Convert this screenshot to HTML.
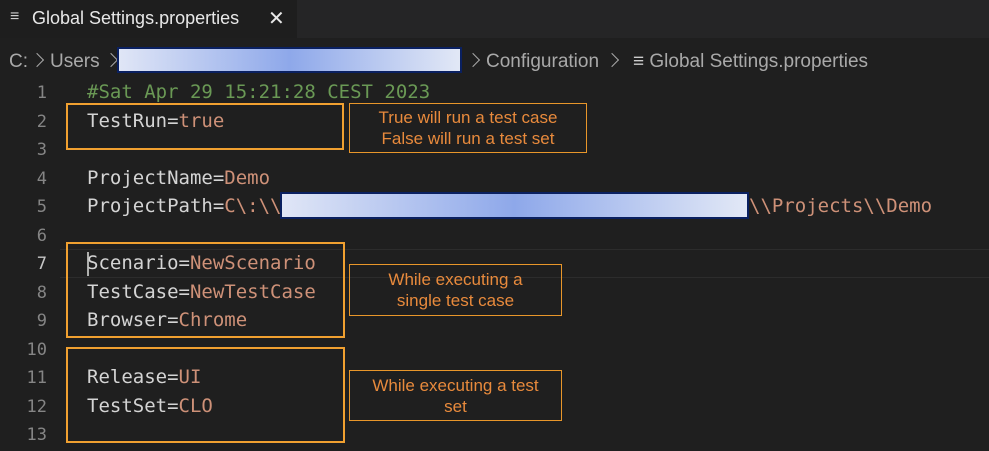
<!DOCTYPE html>
<html><head><style>
body{margin:0;width:989px;height:451px;background:#1f1f1f;overflow:hidden;position:relative;font-family:"Liberation Sans",sans-serif}
.a{position:absolute}
.tabbar{left:0;top:0;width:989px;height:38px;background:#252526}
.tab{left:0;top:0;width:297px;height:38px;background:#1e1e1e;color:#e8e8e8;font-size:18px}
.crumb{top:51px;color:#a9a9a9;font-size:19px;white-space:nowrap}
.ch{display:inline-block;width:9px;height:9px;border-top:1.5px solid #a9a9a9;border-right:1.5px solid #a9a9a9;transform:rotate(45deg);margin:0 8px 2px 2px}
.ln{width:47px;text-align:right;color:#858585;font-family:"DejaVu Sans Mono",monospace;font-size:17px}
.code{left:87px;font-family:"DejaVu Sans Mono",monospace;font-size:19px;color:#d4d4d4;white-space:pre}
.v{color:#ce9178}.c{color:#6a9955}
.box{border:2px solid #f0a030;box-sizing:border-box}
.note{border:1px solid #e8962a;box-sizing:border-box;color:#e88a3c;font-size:17px;text-align:center;line-height:21px}
.blur{border:2px solid #0a2060;box-sizing:border-box;background:linear-gradient(90deg,#e0e6f6,#8ea8ea 50%,#e2e8f6)}
</style></head><body>
<div class="a tabbar"></div>
<div class="a tab"><span class="a" style="left:10px;top:8px;font-size:16px;color:#ccc">≡</span><span class="a" style="left:32px;top:8px">Global Settings.properties</span><span class="a" style="left:268px;top:6px;font-size:20px">✕</span></div>
<div class="a crumb" style="left:9px">C:<span class="ch" style="margin-left:4px"></span>Users<span class="ch" style="margin-left:6px"></span></div>
<div class="a blur" style="left:117px;top:47px;width:345px;height:26px"></div>
<div class="a crumb" style="left:466px"><span class="ch"></span>Configuration<span class="ch" style="margin-left:8px"></span><span style="color:#ccc;margin-left:8px">≡</span> Global Settings.properties</div>
<div class="a" style="left:60px;top:249px;width:929px;height:29px;border-top:1px solid #2c2c2c;border-bottom:1px solid #2c2c2c;box-sizing:border-box"></div>
<div class="a" style="left:87px;top:252px;width:2px;height:24px;background:#aeafad"></div>
<div class="a ln" style="top:83px">1</div><div class="a code c" style="top:81px">#Sat Apr 29 15:21:28 CEST 2023</div>
<div class="a ln" style="top:112px">2</div><div class="a code" style="top:110px">TestRun=<span class="v">true</span></div>
<div class="a ln" style="top:140px">3</div>
<div class="a ln" style="top:169px">4</div><div class="a code" style="top:167px">ProjectName=<span class="v">Demo</span></div>
<div class="a ln" style="top:197px">5</div><div class="a code" style="top:195px">ProjectPath=<span class="v">C\:\\</span></div>
<div class="a code v" style="top:195px;left:749px">\\Projects\\Demo</div>
<div class="a blur" style="left:280px;top:192px;width:469px;height:27px"></div>
<div class="a ln" style="top:226px">6</div>
<div class="a ln" style="top:254px;color:#c6c6c6">7</div><div class="a code" style="top:252px">Scenario=<span class="v">NewScenario</span></div>
<div class="a ln" style="top:283px">8</div><div class="a code" style="top:281px">TestCase=<span class="v">NewTestCase</span></div>
<div class="a ln" style="top:311px">9</div><div class="a code" style="top:309px">Browser=<span class="v">Chrome</span></div>
<div class="a ln" style="top:340px">10</div>
<div class="a ln" style="top:368px">11</div><div class="a code" style="top:366px">Release=<span class="v">UI</span></div>
<div class="a ln" style="top:397px">12</div><div class="a code" style="top:395px">TestSet=<span class="v">CLO</span></div>
<div class="a ln" style="top:425px">13</div>
<div class="a box" style="left:66px;top:103px;width:278px;height:47px"></div>
<div class="a box" style="left:66px;top:242px;width:279px;height:96px"></div>
<div class="a box" style="left:66px;top:347px;width:279px;height:96px"></div>
<div class="a note" style="left:349px;top:103px;width:238px;height:50px;padding-top:3px">True will run a test case<br>False will run a test set</div>
<div class="a note" style="left:349px;top:264px;width:213px;height:52px;padding-top:4px">While executing a<br>single test case</div>
<div class="a note" style="left:349px;top:370px;width:213px;height:51px;padding-top:4px">While executing a test<br>set</div>
</body></html>
